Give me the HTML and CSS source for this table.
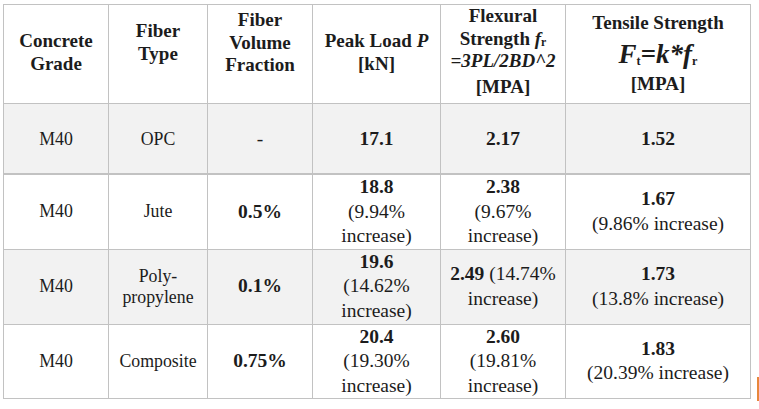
FILE: index.html
```html
<!DOCTYPE html>
<html lang="en">
<head>
<meta charset="utf-8">
<title>Concrete results</title>
<link rel="stylesheet" href="styles.css">
</head>
<body>
<table class="results">
  <colgroup>
    <col class="c1"><col class="c2"><col class="c3"><col class="c4"><col class="c5"><col class="c6">
  </colgroup>
  <thead>
    <tr class="head">
      <th><div class="hd hd-grade">Concrete<br>Grade</div></th>
      <th><div class="hd hd-type">Fiber<br>Type</div></th>
      <th><div class="hd hd-frac">Fiber<br>Volume<br>Fraction</div></th>
      <th><div class="hd hd-peak">Peak Load <i>P</i><br>[kN]</div></th>
      <th>
        <div class="hd hd-flex">
          <div>Flexural</div>
          <div>Strength <i>f</i><sub>r</sub></div>
          <div><i>=3PL/2BD^2</i></div>
          <div class="mpa">[MPA]</div>
        </div>
      </th>
      <th>
        <div class="hd hd-tens">
          <div>Tensile Strength</div>
          <div class="ft"><i>F</i><sub>t</sub>=<i>k*f</i><sub>r</sub></div>
          <div class="mpa2">[MPA]</div>
        </div>
      </th>
    </tr>
  </thead>
  <tbody>
    <tr class="r1 shade">
      <td class="lbl">M40</td>
      <td class="lbl">OPC</td>
      <td>-</td>
      <td><b>17.1</b></td>
      <td><b>2.17</b></td>
      <td><b>1.52</b></td>
    </tr>
    <tr class="r2">
      <td class="lbl">M40</td>
      <td class="lbl">Jute</td>
      <td><b>0.5%</b></td>
      <td><b>18.8</b><br>(9.94%<br>increase)</td>
      <td><b>2.38</b><br>(9.67%<br>increase)</td>
      <td><b>1.67</b><br>(9.86% increase)</td>
    </tr>
    <tr class="r3 shade">
      <td class="lbl">M40</td>
      <td class="lbl">Poly-<br>propylene</td>
      <td><b>0.1%</b></td>
      <td><b>19.6</b><br>(14.62%<br>increase)</td>
      <td><b>2.49</b> (14.74%<br>increase)</td>
      <td><b>1.73</b><br>(13.8% increase)</td>
    </tr>
    <tr class="r4">
      <td class="lbl">M40</td>
      <td class="lbl">Composite</td>
      <td><b>0.75%</b></td>
      <td><b>20.4</b><br>(19.30%<br>increase)</td>
      <td><b>2.60</b><br>(19.81%<br>increase)</td>
      <td><b>1.83</b><br>(20.39% increase)</td>
    </tr>
  </tbody>
</table>
<div class="edge-mark"></div>
</body>
</html>
```
FILE: styles.css
```css
html, body {
  margin: 0;
  padding: 0;
  background: #ffffff;
}

body {
  font-family: "Liberation Serif", "Times New Roman", serif;
  color: #1c1c1c;
  position: relative;
  width: 759px;
  height: 409px;
  overflow: hidden;
}

.results {
  margin: 4px 0 0 3px;
  border-collapse: separate;
  border-spacing: 1px;
  background: #c2c2c2;
  table-layout: fixed;
  width: 748px;
}

.c1 { width: 104px; }
.c2 { width: 98px; }
.c3 { width: 104px; }
.c4 { width: 127px; }
.c5 { width: 124px; }
.c6 { width: 184px; }

th, td {
  padding: 0;
  text-align: center;
  background: #ffffff;
}

.head th {
  height: 98px;
  vertical-align: top;
  font-size: 19px;
  font-weight: bold;
  line-height: 22.5px;
}

.hd-grade { padding-top: 25px; }
.hd-type { padding-top: 15px; }
.hd-frac { padding-top: 4px; }
.hd-peak { padding-top: 25px; }
.hd-flex { padding-top: 0; }
.hd-tens { padding-top: 7px; }

.hd sub {
  font-size: 0.62em;
  line-height: 0;
  vertical-align: -0.12em;
}

.mpa { margin-top: 3px; }

.ft {
  font-size: 27px;
  line-height: 28px;
  margin-top: 5px;
}

.ft sub {
  font-size: 0.45em;
  vertical-align: -0.15em;
}

.mpa2 { margin-top: 5px; }

tbody td {
  vertical-align: middle;
  font-size: 19.5px;
  line-height: 24.5px;
}

tbody td.lbl {
  font-size: 17.8px;
  line-height: 21px;
}

.shade td { background: #f2f2f2; }

.r1 td {
  height: 70px;
  box-shadow: inset 0 -1px 0 #c2c2c2;
}
.r2 td { height: 73px; }
.r3 td { height: 74px; }
.r4 td { height: 73px; }

.edge-mark {
  position: absolute;
  left: 757px;
  top: 377px;
  width: 2px;
  height: 24px;
  background: #e8873c;
}
```
